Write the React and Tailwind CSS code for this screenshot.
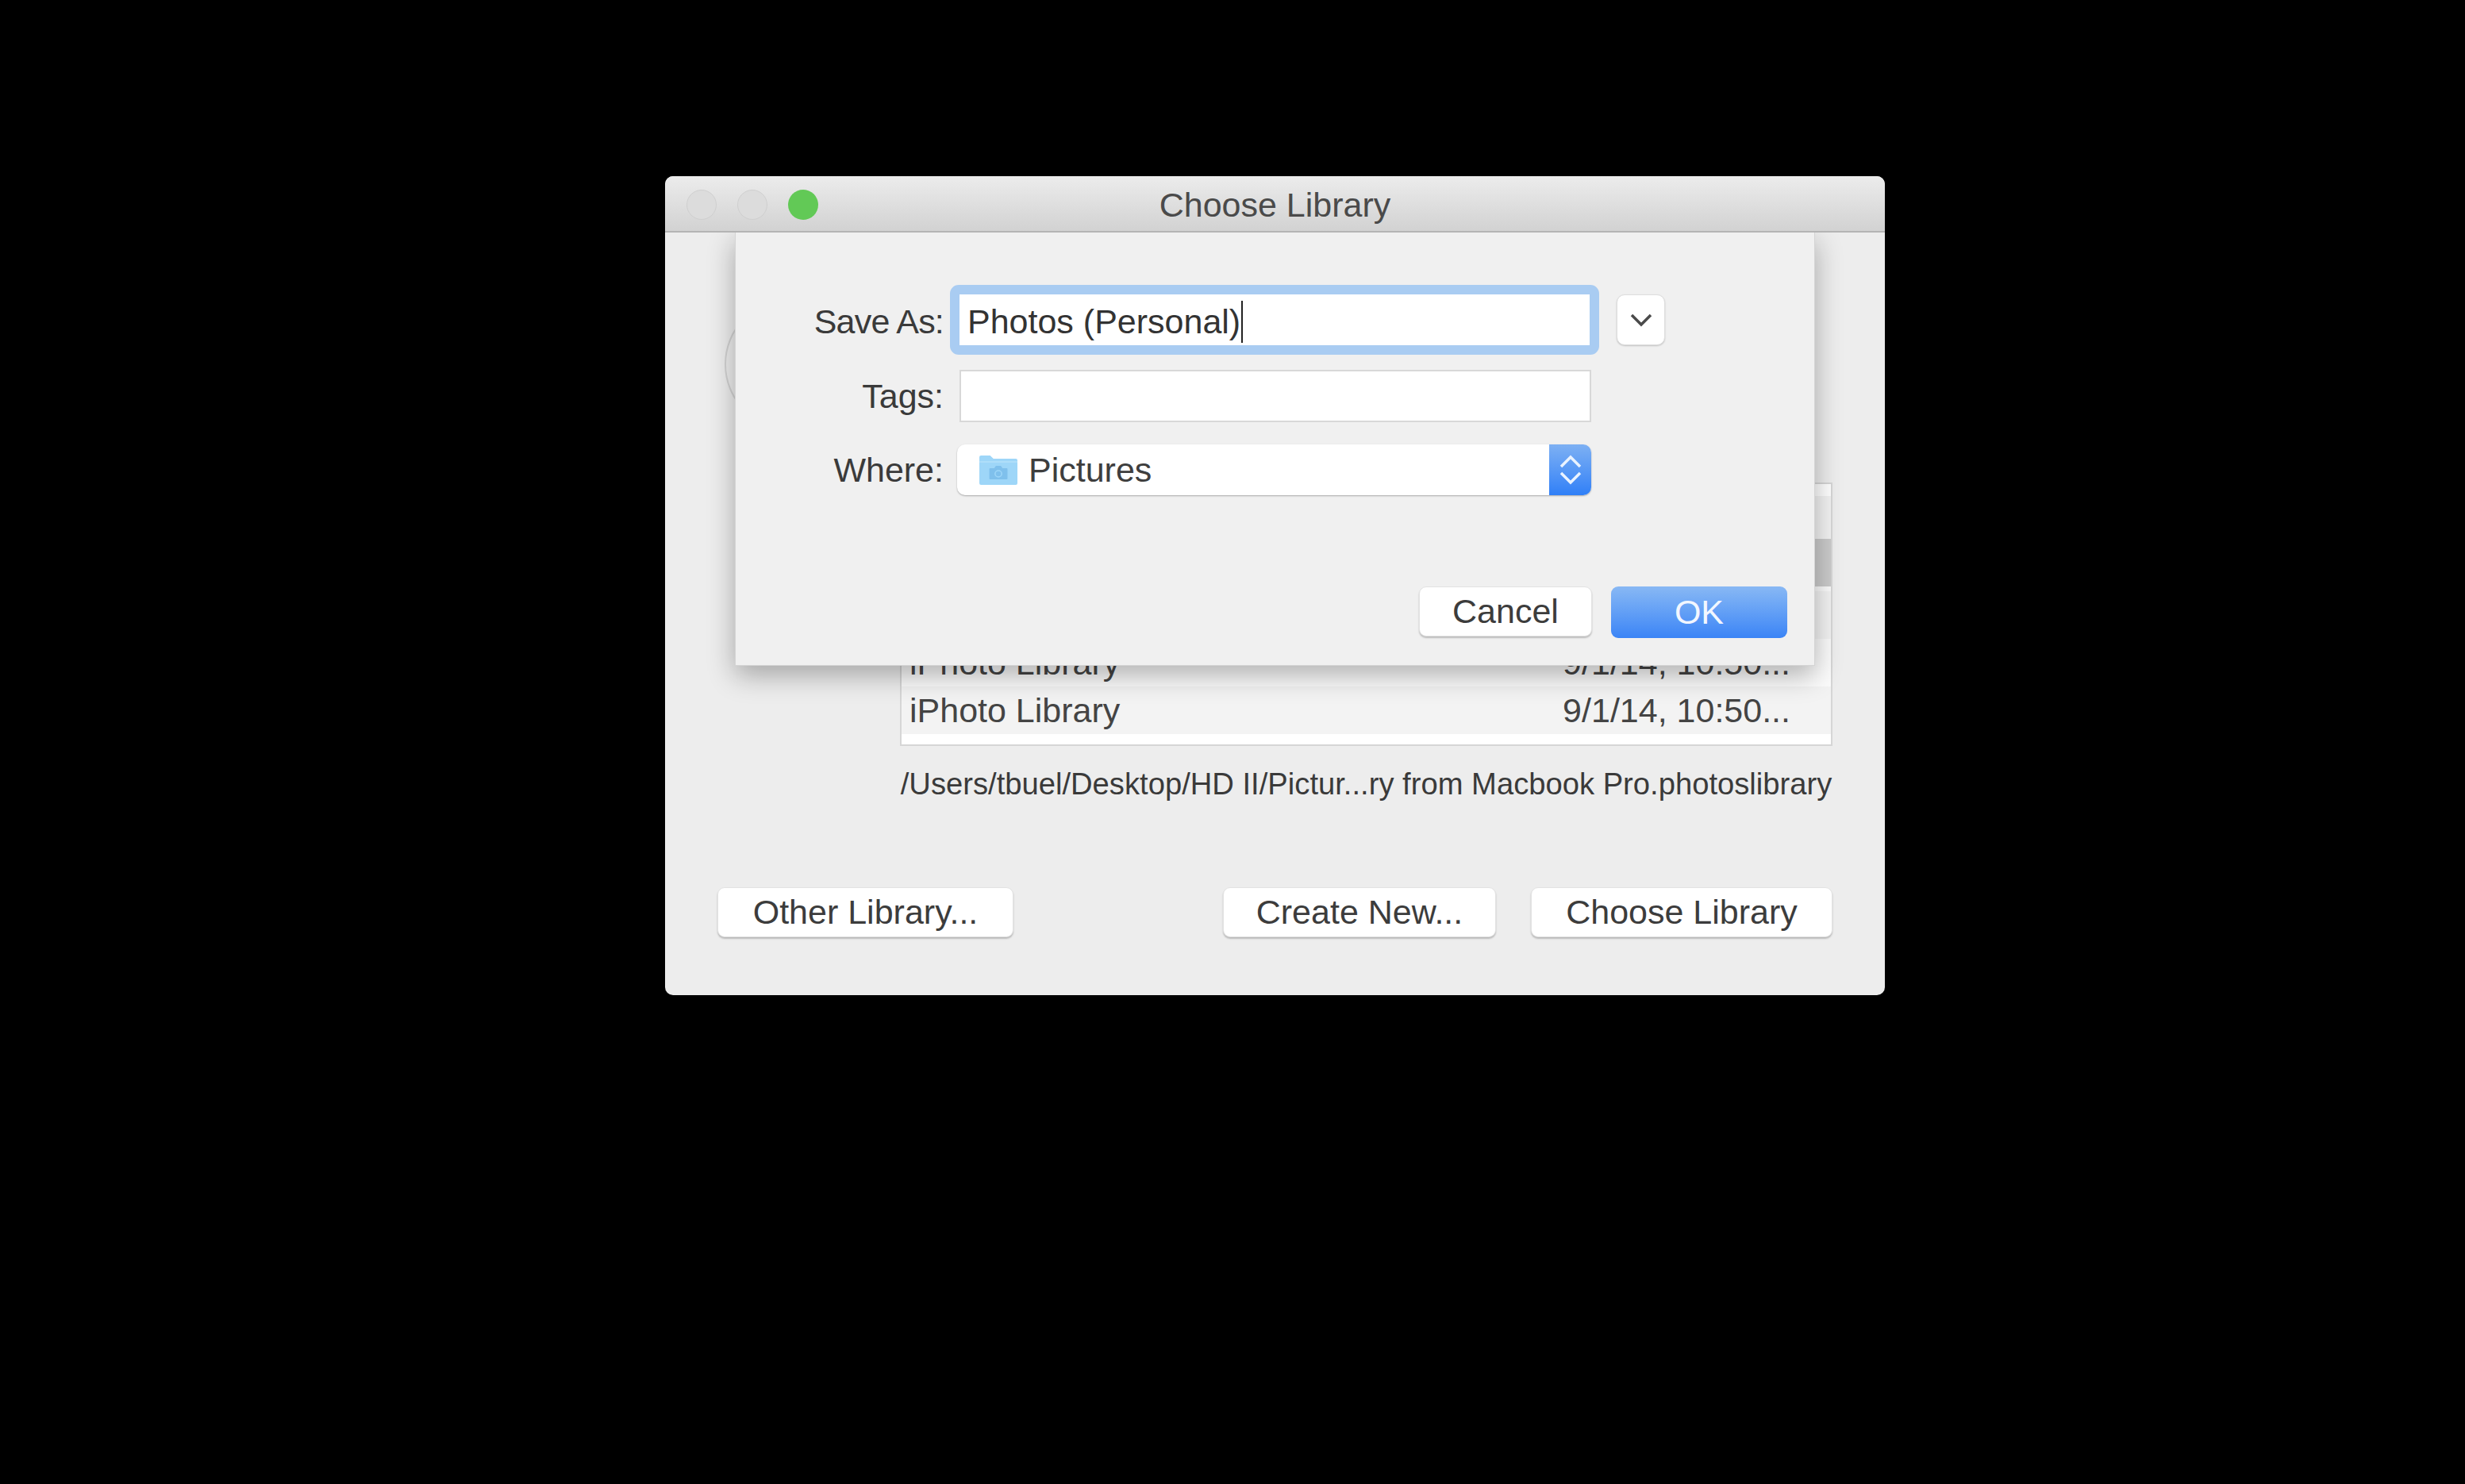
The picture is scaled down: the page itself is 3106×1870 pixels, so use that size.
import React from 'react';

const font = "font-['Liberation_Sans',Arial,sans-serif]";

const PushButton = ({ className = '', children }) => (
  <button
    className={`flex h-[63px] items-center justify-center rounded-[9px] border border-[#e2e2e2] bg-white text-[43px] leading-none text-[#3c3c3c] shadow-[0_2px_2px_rgba(0,0,0,0.22)] ${className}`}
  >
    {children}
  </button>
);

const FolderIcon = () => (
  <svg width="49" height="38" viewBox="0 0 47 38" preserveAspectRatio="none" className="shrink-0">
    <path d="M1 3a2 2 0 0 1 2-2h11l4 4h27a2 2 0 0 1 2 2v29a2 2 0 0 1-2 2H3a2 2 0 0 1-2-2z" fill="#9ed6f8" />
    <path d="M1 9h46" stroke="#b4e0fa" strokeWidth="1.5" />
    <path
      d="M14 17h5l2-3h6l2 3h5a1 1 0 0 1 1 1v12a1 1 0 0 1-1 1H14a1 1 0 0 1-1-1V18a1 1 0 0 1 1-1z"
      fill="#7fc0ec"
    />
    <circle cx="24" cy="24" r="4" fill="none" stroke="#9ed6f8" strokeWidth="1.5" />
  </svg>
);

const LibraryRow = ({ striped }) => (
  <div
    className={`flex h-[60px] shrink-0 items-center justify-between pl-[10px] pr-[51px] text-[43px] leading-none text-[#444444] ${
      striped ? 'bg-[#f3f3f3]' : 'bg-[#fbfbfb]'
    }`}
  >
    <span>iPhoto Library</span>
    <span>9/1/14, 10:50...</span>
  </div>
);

export default function App() {
  return (
    <div className={`min-h-[1870px] bg-black pl-[838px] pt-[222px] ${font}`}>
      <div className="w-[1537px] overflow-hidden rounded-[10px] bg-[#ededed]">
        {/* title bar */}
        <div className="relative z-10 flex h-[71px] items-center justify-center border-b-2 border-[#b4b4b4] bg-linear-to-b from-[#ececec] to-[#d2d2d2] pt-[3px]">
          <div className="absolute left-[27px] top-[17px] flex gap-[26px]">
            <div className="h-[38px] w-[38px] rounded-full border border-[#cfcfcf] bg-[#dcdcdc]" />
            <div className="h-[38px] w-[38px] rounded-full border border-[#cfcfcf] bg-[#dcdcdc]" />
            <div className="h-[38px] w-[38px] rounded-full bg-[#62c956]" />
          </div>
          <span className="text-[43px] leading-none text-[#4a4a4a]">Choose Library</span>
        </div>

        <div className="relative px-[66px] pb-[73px] pt-[315px]">
          {/* app icon behind the sheet */}
          <div className="absolute left-[75px] top-[83px] h-[166px] w-[166px] rounded-full border-2 border-[#d2d2d2]" />

          {/* library list */}
          <div className="relative ml-[230px] flex h-[332px] w-[1175px] flex-col justify-end overflow-hidden border-2 border-[#d6d6d6] bg-white pb-[13px]">
            <LibraryRow striped />
            <LibraryRow />
            <LibraryRow striped />
            <LibraryRow />
            <LibraryRow striped />
            <div className="absolute right-0 top-[69px] h-[60px] w-[22px] bg-[#cbcbcb]" />
          </div>

          <div className="ml-[230px] mt-[26px] w-[1175px] whitespace-nowrap text-center text-[38.2px] leading-[44px] text-[#3a3a3a]">
            /Users/tbuel/Desktop/HD II/Pictur...ry from Macbook Pro.photoslibrary
          </div>

          <div className="mt-[108px] flex items-center">
            <PushButton className="w-[373px]">Other Library...</PushButton>
            <PushButton className="ml-auto w-[344px]">Create New...</PushButton>
            <PushButton className="ml-[44px] w-[380px]">Choose Library</PushButton>
          </div>

          {/* save sheet */}
          <div className="absolute left-[88px] top-0 flex h-[546px] w-[1361px] flex-col border-x border-b border-[#d4d4d4] bg-[#f0f0f0] pb-[34px] pr-[34px] pt-[66px] shadow-[0_12px_32px_rgba(0,0,0,0.3)]">
            <div className="flex items-center">
              <div className="w-[262px] pt-[4px] text-right text-[43px] leading-none tracking-[-0.8px] text-[#3a3a3a]">Save As:</div>
              <div className="ml-[8px] box-content flex h-[60px] w-[784px] items-center rounded-[11px] border-[12px] border-[#a9ccf2] bg-white pl-[10px] pt-[4px] text-[43px] leading-none text-[#333333]">
                Photos (Personal)
                <span className="ml-[1px] h-[53px] w-[2px] bg-[#222222]" />
              </div>
              <div className="ml-[22px] flex h-[64px] w-[61px] items-center justify-center rounded-[10px] border border-[#dedede] bg-white shadow-[0_1px_2px_rgba(0,0,0,0.2)]">
                <svg width="30" height="18" viewBox="0 0 30 18" fill="none">
                  <path d="M3 3l12 12L27 3" stroke="#4a4a4a" strokeWidth="3.5" />
                </svg>
              </div>
            </div>

            <div className="mt-[19px] flex items-center">
              <div className="w-[262px] text-right text-[43px] leading-none text-[#3a3a3a]">Tags:</div>
              <div className="ml-[20px] h-[66px] w-[796px] border-2 border-[#d8d8d8] bg-white" />
            </div>

            <div className="mt-[28px] flex items-center">
              <div className="w-[262px] text-right text-[43px] leading-none text-[#3a3a3a]">Where:</div>
              <div className="ml-[17px] flex h-[64px] w-[799px] items-center overflow-hidden rounded-[10px] bg-white shadow-[0_1px_2px_rgba(0,0,0,0.3)]">
                <div className="ml-[27px] flex min-w-0 flex-1 items-center gap-[14px] text-[43px] leading-none text-[#3e3e3e]">
                  <FolderIcon />
                  Pictures
                </div>
                <div className="flex h-full w-[53px] flex-col items-center justify-center bg-linear-to-b from-[#7db0f3] to-[#2f7ff7]">
                  <svg width="30" height="44" viewBox="0 0 30 44" fill="none">
                    <path d="M3 18L15 6l12 12M3 26l12 12 12-12" stroke="#eaf3ff" strokeWidth="3.5" />
                  </svg>
                </div>
              </div>
            </div>

            <div className="mt-auto flex justify-end gap-[24px]">
              <PushButton className="w-[218px]">Cancel</PushButton>
              <div className="flex h-[65px] w-[222px] items-center justify-center rounded-[9px] bg-linear-to-b from-[#88b8f4] to-[#3a84f6] text-[43px] leading-none text-[#f2f7ff]">
                OK
              </div>
            </div>
          </div>
        </div>
      </div>
    </div>
  );
}
